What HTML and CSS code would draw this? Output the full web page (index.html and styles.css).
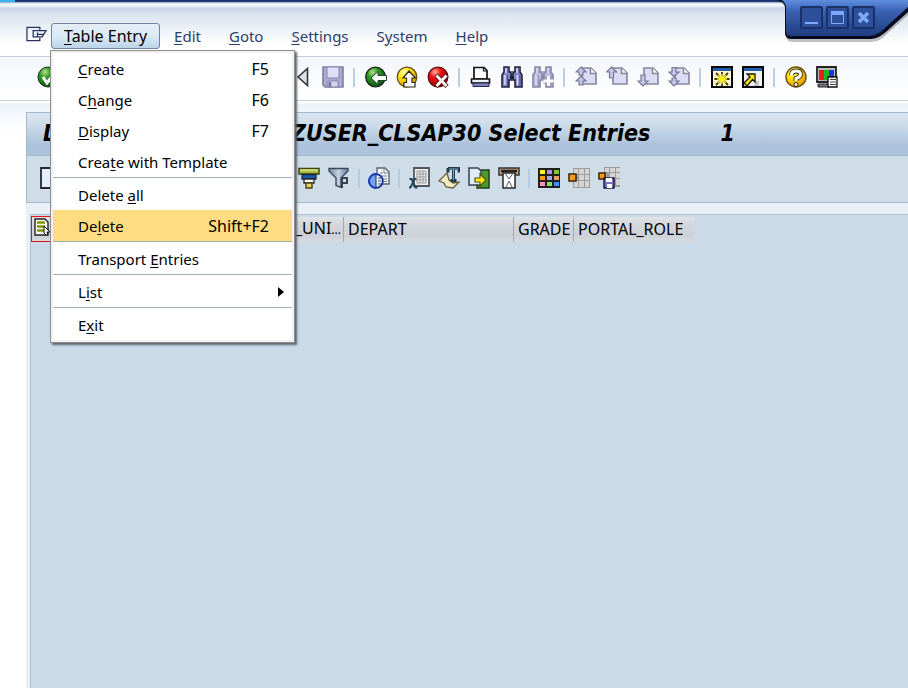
FILE: index.html
```html
<!DOCTYPE html>
<html lang="en">
<head>
<meta charset="utf-8">
<title>ZUSER_CLSAP30 Select Entries</title>
<link rel="stylesheet" href="styles.css">
</head>
<body>
<svg class="defs" width="0" height="0" aria-hidden="true">
  <defs>
    <radialGradient id="gGreen" cx="0.35" cy="0.25" r="0.8"><stop offset="0" stop-color="#b5e08c"/><stop offset="0.35" stop-color="#2f9a22"/><stop offset="1" stop-color="#0d4c12"/></radialGradient>
    <radialGradient id="gYellow" cx="0.35" cy="0.25" r="0.85"><stop offset="0" stop-color="#ffffb0"/><stop offset="0.4" stop-color="#ffe000"/><stop offset="1" stop-color="#e08a00"/></radialGradient>
    <radialGradient id="gRed" cx="0.35" cy="0.25" r="0.85"><stop offset="0" stop-color="#ffb0a0"/><stop offset="0.35" stop-color="#f01010"/><stop offset="1" stop-color="#8a0000"/></radialGradient>
    <linearGradient id="gCorner" x1="0" y1="0" x2="0" y2="1"><stop offset="0" stop-color="#5f8fe0"/><stop offset="0.3" stop-color="#3a62b4"/><stop offset="1" stop-color="#1f3c7e"/></linearGradient>
    <linearGradient id="gFunnel" x1="0" y1="0" x2="1" y2="0"><stop offset="0" stop-color="#7289a6"/><stop offset="0.5" stop-color="#c5d2e2"/><stop offset="1" stop-color="#62799a"/></linearGradient>
    <symbol id="binoculars" viewBox="0 0 22 22">
      <path d="M3 1h5v5h2v3h2V6h2V1h5v5l2 3v12h-7v-7H8v7H1V9l2-3z" fill="var(--fill)" stroke="var(--line)" stroke-width="1.6"/>
      <path d="M5 2v5M16 2v5M4 9v10M16.500 9v10" stroke="#d9dcfa" stroke-width="1.500"/>
      <path d="M7 2v5M18 2v5M6.500 9v11M19 9v11" stroke="var(--dark)" stroke-width="1.200"/>
      <path d="M9 10h4v3H9z" fill="var(--line)"/>
    </symbol>
    <symbol id="page" viewBox="0 0 22 22">
      <path d="M7 2h9l5 5v11H7z" fill="#dcdcf6" stroke="#85859c" stroke-width="1.600"/>
      <path d="M15.500 2v5.500H21" fill="#fff" stroke="#85859c" stroke-width="1.500"/>
    </symbol>
  </defs>
</svg>

<div class="window">
  <div class="window-corner">
    <svg class="corner-shape" viewBox="0 0 130 48" aria-hidden="true">
      <path d="M0 2C5 3 7 6 8 10V37Q9 42 14 42H94Q103 41 109 34L130 15V0H0z" fill="#3a3a44" opacity=".3"/>
      <path d="M0 0C5 2 7 4 7 8V34Q8 39 13 39H93Q102 38 109 31L130 12V0H0z" fill="#070b1e"/>
      <path d="M4 0C6 2 8 4 8 7V33Q9 36 13 36H92Q100 35 106 29L130 7V0H2z" fill="url(#gCorner)"/>
    </svg>
    <div class="window-buttons">
      <button type="button" aria-label="Minimize"><svg viewBox="0 0 19 19"><path d="M3 15h13" stroke="#7ea9fa" stroke-width="2"/></svg></button>
      <button type="button" aria-label="Maximize"><svg viewBox="0 0 19 19"><path d="M3.500 3.500h12v12h-12z" fill="none" stroke="#7ea9fa"/><path d="M3 5h13" stroke="#7ea9fa" stroke-width="4"/></svg></button>
      <button type="button" aria-label="Close"><svg viewBox="0 0 19 19"><path d="M5 5l9 9M14 5l-9 9" stroke="#7ea9fa" stroke-width="3.600"/></svg></button>
    </div>
  </div>

  <nav class="menubar" aria-label="Menu bar">
    <button class="session" type="button" aria-label="Session menu"><svg viewBox="0 0 22 16" fill="none" stroke="#26355f" stroke-width="1.300"><path d="M14.500 4V1H1v14h13.500v-3"/><path d="M21 4.500H7.500v6.500H17zM12 8.500h6M12 6.500v4"/></svg></button>
    <div class="menu-root">
      <button class="menu-title open" type="button" aria-expanded="true"><u>T</u>able Entry</button>
      <div class="menu" role="menu">
        <button type="button" role="menuitem"><span><u>C</u>reate</span><kbd>F5</kbd></button>
        <button type="button" role="menuitem"><span>C<u>h</u>ange</span><kbd>F6</kbd></button>
        <button type="button" role="menuitem"><span><u>D</u>isplay</span><kbd>F7</kbd></button>
        <button type="button" role="menuitem"><span>Crea<u>t</u>e with Template</span></button>
        <hr>
        <button type="button" role="menuitem"><span>Delete <u>a</u>ll</span></button>
        <button type="button" role="menuitem" class="active"><span>De<u>l</u>ete</span><kbd>Shift+F2</kbd></button>
        <hr>
        <button type="button" role="menuitem"><span>Transport <u>E</u>ntries</span></button>
        <hr>
        <button type="button" role="menuitem" class="has-submenu"><span>L<u>i</u>st</span><svg viewBox="0 0 6 10" aria-hidden="true"><path d="M0 0l6 5-6 5z"/></svg></button>
        <hr>
        <button type="button" role="menuitem"><span>E<u>x</u>it</span></button>
      </div>
    </div>
    <button class="menu-title" type="button"><u>E</u>dit</button>
    <button class="menu-title" type="button"><u>G</u>oto</button>
    <button class="menu-title" type="button"><u>S</u>ettings</button>
    <button class="menu-title" type="button">S<u>y</u>stem</button>
    <button class="menu-title" type="button"><u>H</u>elp</button>
  </nav>

  <div class="toolbar" role="toolbar" aria-label="Standard toolbar">
    <button type="button" aria-label="Enter"><svg viewBox="0 0 22 22"><circle cx="11" cy="11" r="10" fill="url(#gGreen)" stroke="#152c15"/><path d="M6 11l4 6 7-9" fill="none" stroke="#fff" stroke-width="3"/></svg></button>
    <input class="command" type="text" aria-label="Command">
    <button type="button" aria-label="Collapse command field"><svg viewBox="0 0 22 22"><path d="M16.500 2.500v17L7 11z" fill="#dde0e6" stroke="#30343c" stroke-width="1.600"/></svg></button>
    <button type="button" aria-label="Save"><svg viewBox="0 0 22 22"><path d="M1 1h20v20H3l-2-2z" fill="#a9a9d2" stroke="#8080a4" stroke-width="1.600"/><path d="M5 1h12v11H5z" fill="#e0e0fa" stroke="#8585ae"/><path d="M6 15h10v6H6z" fill="#d4d4ea" stroke="#8585ae"/><path d="M8 16v5" stroke="#77779c" stroke-width="2.500"/></svg></button>
    <i class="sep"></i>
    <button type="button" aria-label="Back"><svg viewBox="0 0 22 22"><circle cx="10.500" cy="11" r="9.800" fill="url(#gGreen)" stroke="#17271b" stroke-width="1.300"/><path d="M6 12l7-6.500V9.500h8.500v5H13v4z" fill="#fff" stroke="#26402b" stroke-width="1"/></svg></button>
    <button type="button" aria-label="Exit"><svg viewBox="0 0 22 22"><circle cx="11" cy="11" r="9.800" fill="url(#gYellow)" stroke="#66511a" stroke-width="1.300"/><path d="M13 5l6.500 7H16v4.500h3V21H8v-4.500h2.500V12H7z" fill="#fff" stroke="#2c2713" stroke-width="1.200"/></svg></button>
    <button type="button" aria-label="Cancel"><svg viewBox="0 0 22 22"><circle cx="11" cy="11" r="9.800" fill="url(#gRed)" stroke="#5d0d0d" stroke-width="1.300"/><path d="M9 9l11 11.500M20 9L9 20.500" stroke="#4a1717" stroke-width="4.500"/><path d="M9.500 9.500l10 10.500M19.500 9.500L9.500 20" stroke="#fff" stroke-width="2.800"/></svg></button>
    <i class="sep"></i>
    <button type="button" aria-label="Print"><svg viewBox="0 0 22 22"><path d="M4 1.500h10l3 3V13H4z" fill="#fff" stroke="#111" stroke-width="1.700"/><path d="M13.500 1.500V5H17" fill="none" stroke="#111" stroke-width="1.200"/><path d="M1.500 13h18v4h-18z" fill="#eeeefa" stroke="#111" stroke-width="1.600"/><path d="M3 17h16v3.500H3z" fill="#7d82bd" stroke="#22244e"/></svg></button>
    <button type="button" aria-label="Find" class="strong"><svg viewBox="0 0 22 22"><use href="#binoculars"/></svg></button>
    <button type="button" aria-label="Find next" class="faded"><svg viewBox="0 0 22 22"><use href="#binoculars"/><path d="M16.500 10v10M11.500 15h10" stroke="#9898bc" stroke-width="5"/><path d="M16.500 10v10M11.500 15h10" stroke="#fff" stroke-width="2.800"/></svg></button>
    <i class="sep"></i>
    <button type="button" aria-label="First page"><svg viewBox="0 0 22 22"><use href="#page"/><path d="M6 1l5 5H8v3H4V6H1zM6 10l5 5H8v4H4v-4H1z" fill="#c5c5ee" stroke="#77778f" stroke-width="1.200"/></svg></button>
    <button type="button" aria-label="Previous page"><svg viewBox="0 0 22 22"><use href="#page"/><path d="M5.500 1l5 5H7.500v6h-4V6H.5z" fill="#c5c5ee" stroke="#77778f" stroke-width="1.200"/></svg></button>
    <button type="button" aria-label="Next page"><svg viewBox="0 0 22 22"><use href="#page"/><path d="M6 20l-5-5h3V9h4v6h3z" fill="#c5c5ee" stroke="#77778f" stroke-width="1.200"/></svg></button>
    <button type="button" aria-label="Last page"><svg viewBox="0 0 22 22"><use href="#page"/><path d="M6 10.500L1 6h3V1.500h4V6h3zM6 20l-5-5h3v-3h4v3h3z" fill="#c5c5ee" stroke="#77778f" stroke-width="1.200"/></svg></button>
    <i class="sep"></i>
    <button type="button" aria-label="New session"><svg viewBox="0 0 22 22"><path d="M1 1h20v20H1z" fill="#fff9cf" stroke="#080808" stroke-width="2"/><path d="M2 2h18v3H2z" fill="#235ca8"/><path d="M11 6v4M11 16v4M3.500 13H8M14 13h4.500M5 7l4 4M17 7l-4 4M5 19l4-4M17 19l-4-4" stroke="#3e390b" stroke-width="1.800"/><path d="M11 8v10M6 13h10M7 9l8 8M15 9l-8 8" stroke="#fff000" stroke-width="1.300"/></svg></button>
    <button type="button" aria-label="Create shortcut"><svg viewBox="0 0 22 22"><path d="M1 1h20v20H1z" fill="#f2f2ee" stroke="#080808" stroke-width="2"/><path d="M2 2h18v3H2z" fill="#235ca8"/><path d="M13 15h4v5h-5z" fill="#c4c6cb"/><path d="M5 8h8v8l-2.500-2.500L5 20l-3-3 6-6z" fill="#f6e600" stroke="#1d1b05" stroke-width="1.300"/></svg></button>
    <i class="sep"></i>
    <button type="button" aria-label="Help"><svg viewBox="0 0 22 22"><circle cx="11" cy="11" r="10" fill="url(#gYellow)" stroke="#6b4d12" stroke-width="1.400"/><path d="M6.500 9q0-4 4.500-4t4.500 3.500q0 2.500-4.500 4v2.500" fill="none" stroke="#2a2410" stroke-width="4.800"/><path d="M6.500 9q0-4 4.500-4t4.500 3.500q0 2.500-4.500 4v2.500" fill="none" stroke="#fff" stroke-width="3"/><circle cx="11" cy="18.500" r="2" fill="#fff" stroke="#2a2410"/></svg></button>
    <button type="button" aria-label="Customize local layout"><svg viewBox="0 0 22 22"><path d="M1 1h19v15H1z" fill="#b9bbc0" stroke="#222" stroke-width="1.800"/><path d="M3 4h5v10H3z" fill="#f01c1c"/><path d="M8 4h5v10H8z" fill="#16ba22"/><path d="M13 4h5v10h-5z" fill="#1c32e0"/><path d="M2 18h11v3H2z" fill="#7b7b82" stroke="#222"/><path d="M12 11h9v10h-9z" fill="#fff" stroke="#111" stroke-width="1.300"/><path d="M14 13.500h6M14 16h6M14 18.500h6" stroke="#444"/></svg></button>
  </div>

  <main class="content">
    <h1 class="title"><span class="title-prefix">D</span><span>ZUSER_CLSAP30 Select Entries</span><span class="count">1</span></h1>

    <div class="app-toolbar" role="toolbar" aria-label="Application toolbar">
      <button type="button" aria-label="Create"><svg viewBox="0 0 22 22"><path d="M2 1h18v20H2z" fill="#e2effa" stroke="#26282c" stroke-width="1.800"/></svg></button>
      <span class="spacer"></span>
      <button type="button" aria-label="Sort"><svg viewBox="0 0 22 22"><path d="M1 1.500h20v5.500H1z" fill="#a9bc3b" stroke="#3d4516" stroke-width="1.500"/><path d="M2 3h18" stroke="#dbe58a" stroke-width="1.500"/><path d="M4 7.500h14v4.500H4z" fill="#1b5aa2" stroke="#152a48" stroke-width="1.300"/><path d="M6 12h10v4H6z" fill="#fff" stroke="#24272c" stroke-width="1.300"/><path d="M8 16h6v5H8z" fill="#e6d35f" stroke="#4a4216" stroke-width="1.400"/></svg></button>
      <button type="button" aria-label="Filter"><svg viewBox="0 0 22 22"><path d="M1 1.500h19v2.500l-7 7v9.500l-5-2v-7.500L1 4z" fill="url(#gFunnel)" stroke="#3c4a5c" stroke-width="1.400"/><path d="M14 11h5v5h-5v5M14 11v6" fill="none" stroke="#39424e" stroke-width="2"/></svg></button>
      <i class="sep"></i>
      <button type="button" aria-label="Details"><svg viewBox="0 0 22 22"><path d="M9 1h8l4 4v12H9z" fill="#f3f6fb" stroke="#5b6572" stroke-width="1.400"/><path d="M16 1v5h5M12 6h3M12 9h7M12 12h7M12 14.500h7" fill="none" stroke="#727d8e"/><circle cx="8" cy="14" r="6.800" fill="#f2f8ff" stroke="#0f2c99" stroke-width="1.800"/><path d="M8 7a7 7 0 000 14z" fill="#76a3ea"/><path d="M8 7a7 7 0 000 14" fill="none" stroke="#123bbd" stroke-width="1.800"/><path d="M8 8v12M10 11h3M10 14h3M10 17h3" stroke="#26457a" stroke-width="1.200"/></svg></button>
      <i class="sep"></i>
      <button type="button" aria-label="Spreadsheet"><svg viewBox="0 0 22 22"><path d="M6 1h15v18H6z" fill="#eee" stroke="#50555d" stroke-width="1.800"/><path d="M9 4h9v12H9zM9 7h9M9 10h9M9 13h9M12 4v12M15 4v12" fill="none" stroke="#999" stroke-width="1"/><path d="M1.500 12h2l4 8.500h2M8.500 12h-2l-4 8.500H1" fill="none" stroke="#20465e" stroke-width="2"/></svg></button>
      <button type="button" aria-label="Word processing"><svg viewBox="0 0 22 22"><path d="M1 14l8-8 2 7 4 3 6-1-6 6-7-1-2-4z" fill="#f3edc2" stroke="#66603e" stroke-width="1.300"/><path d="M10 1.500h11v4M10 1v4.500M15.500 2v11M12.500 13.500h6" fill="none" stroke="#253c4e" stroke-width="3"/><path d="M11 2h9M15.500 2v11" stroke="#7faac5" stroke-width="1"/></svg></button>
      <button type="button" aria-label="Local file"><svg viewBox="0 0 22 22"><path d="M11 3h10v18H9V10z" fill="#469d2c" stroke="#203c17" stroke-width="1.500"/><path d="M1 1h9l3 3v14H1z" fill="#dfedf9" stroke="#354354" stroke-width="1.500"/><path d="M7 11h5V7l6 6-6 6v-4H7z" fill="#ffec17" stroke="#565011" stroke-width="1.200"/></svg></button>
      <button type="button" aria-label="Mail recipient"><svg viewBox="0 0 22 22"><path d="M1 1h20v7H1z" fill="#c3a378" stroke="#333" stroke-width="1.500"/><path d="M3 4h16" stroke="#222" stroke-width="2.500"/><path d="M5 6h12v15H5z" fill="#fff" stroke="#282828" stroke-width="1.500"/><path d="M7.500 7l3.500 5 3.500-5M8 20l3-6 3 6" fill="none" stroke="#59616d" stroke-width="1"/></svg></button>
      <i class="sep"></i>
      <button type="button" aria-label="Choose layout"><svg viewBox="0 0 22 22"><path d="M0 1h22v20H0z" fill="#202020"/><path d="M2 3h5v4H2z" fill="#fff028"/><path d="M9 3h5v4H9z" fill="#b48ee0"/><path d="M16 3h5v4h-5z" fill="#78c83c"/><path d="M2 9h5v4H2z" fill="#ff9c18"/><path d="M9 9h5v4H9z" fill="#a9ace2"/><path d="M16 9h5v4h-5z" fill="#e4a070"/><path d="M2 15h5v4H2z" fill="#ff94b4"/><path d="M9 15h5v4H9z" fill="#8ce060"/><path d="M16 15h5v4h-5z" fill="#3d91ff"/></svg></button>
      <button type="button" aria-label="Change layout"><svg viewBox="0 0 22 22"><path d="M5 1h17v20H5z" fill="#9c9c9c"/><path d="M6 2h4v5H6zM11 2h5v5h-5zM17 2h4v5h-4zM11 8h5v5h-5zM17 8h4v5h-4zM6 14h4v6H6zM11 14h5v6h-5zM17 14h4v6h-4z" fill="#d4d4d4"/><path d="M1 7h7v7H1z" fill="#ff9a14" stroke="#392507" stroke-width="1.500"/></svg></button>
      <button type="button" aria-label="Save layout"><svg viewBox="0 0 22 22"><path d="M6 0h16v20H6z" fill="#9c9c9c"/><path d="M7 1h4v4H7zM12 1h5v4h-5zM18 1h4v4h-4zM12 6h5v5h-5zM18 6h4v5h-4zM18 12h4v6h-4z" fill="#d4d4d4"/><path d="M1 6h6v6H1z" fill="#ff9a14" stroke="#392507" stroke-width="1.500"/><path d="M6 11h10v10H6z" fill="#7474bf" stroke="#1b1b40" stroke-width="1.400"/><path d="M8 11h6v4H8zM9 17h5v4H9z" fill="#fff"/></svg></button>
    </div>

    <div class="grid">
      <table>
        <colgroup><col class="c-select"><col class="c-key"><col class="c-unit"><col class="c-depart"><col class="c-grade"><col class="c-role"></colgroup>
        <thead>
          <tr>
            <th class="select-all" scope="col"><button type="button" aria-label="Select all"><svg viewBox="0 0 16 18"><path d="M1 1h10l3 3v13H1z" fill="#fff" stroke="#222" stroke-width="1.400"/><path d="M3 4.500h8M3 8.500h8M3 12.500h8" stroke="#7c9800" stroke-width="2.600"/><path d="M10 8l6 6h-3l1 3h-2l-2-2z" fill="#fff" stroke="#111"/></svg></button></th>
            <th scope="col"></th>
            <th class="unit" scope="col">S_UNI<small>...</small></th>
            <th scope="col">DEPART</th>
            <th scope="col">GRADE</th>
            <th scope="col">PORTAL_ROLE</th>
          </tr>
        </thead>
      </table>
    </div>
  </main>
</div>
</body>
</html>
```
FILE: styles.css
```css
* { box-sizing: border-box; }

body {
  margin: 0;
  font: 16px/20px Tahoma, "Noto Sans", sans-serif;
  color: #000;
  background: #fff;
}

button {
  margin: 0;
  padding: 0;
  border: 0;
  background: none;
  font: inherit;
  color: inherit;
}

svg { display: block; }
.defs { position: absolute; }
u { text-underline-offset: 2px; text-decoration-thickness: 1px; }

.window {
  position: relative;
  display: flex;
  flex-direction: column;
  min-height: 100vh;
  overflow: hidden;
  background: linear-gradient(90deg, #35b5f0 15px, #1d3470 15px) 0 0 / 100% 2px no-repeat;
}

.window-corner {
  position: absolute;
  top: 0;
  right: 0;
  width: 130px;
}

.window-buttons {
  position: absolute;
  top: 6px;
  left: 22px;
  display: flex;
  gap: 3px;
}

.window-buttons button {
  width: 23px;
  height: 23px;
  border: 2px solid #1a3068;
  border-radius: 2px;
  background: #2e509a;
}

.menubar {
  display: flex;
  align-items: center;
  height: 55px;
  margin-top: 2px;
  padding: 13px 0 0 26px;
  border-bottom: 1px solid #c3cad9;
  background: linear-gradient(#93a5c0 0, #f6f9fc 2px, #f0f4f9 4px, #c9d6e6 6px, #dde5ef 14px, #fff 42px);
  color: #2c3e6b;
}

.session { width: 25px; margin-top: -4px; }
.session svg { width: 21px; height: 16px; }

.menu-root { position: relative; }

.menu-title {
  height: 26px;
  padding: 0 13px;
  border: 1px solid transparent;
  font-size: 15px;
  white-space: nowrap;
}

.menu-title.open {
  padding: 0 12px;
  border-color: #73839f;
  border-radius: 3px;
  background: linear-gradient(#e5edf6, #dceaf5 50%, #bcd4e8);
  color: #000;
  font-size: 16px;
}

.menu {
  position: absolute;
  z-index: 2;
  top: 27px;
  left: -1px;
  width: 245px;
  padding: 2px;
  border: 1px solid #8e8e8e;
  background: #fff;
  box-shadow: inset 0 0 0 2px #f1f1f1, 2px 2px 2px #5e646c;
  color: #000;
  font-size: 15px;
}

.menu button {
  display: flex;
  align-items: center;
  justify-content: space-between;
  width: 100%;
  height: 31px;
  padding: 2px 23px 0 25px;
}

.menu kbd { font: inherit; font-size: 16px; }
.menu .active { background: #fddc82; }
.menu .has-submenu { padding-right: 8px; }
.menu svg { width: 6px; height: 10px; }

.menu hr {
  height: 2px;
  margin: 0;
  border: 0;
  border-top: 1px solid #a4afbd;
}

.toolbar {
  display: flex;
  align-items: center;
  height: 44px;
  padding-left: 32px;
  padding-bottom: 3px;
  border-bottom: 1px solid #c6d0dd;
  background: linear-gradient(#fff 0, #f4f6fb 2px, #fff 36px);
}

.toolbar button { flex: none; width: 31px; }
.toolbar svg { width: 22px; height: 22px; margin: 0 auto; }

.command {
  width: 223px;
  height: 24px;
  border: 1px solid #9aa7b8;
}

.sep {
  flex: none;
  width: 2px;
  height: 19px;
  margin: 0 5px;
  background: #b9d0e4;
}

.strong { --fill: #8388c6; --line: #20223a; --dark: #4d5394; }
.faded { --fill: #bcbce0; --line: #8585a5; --dark: #9696bf; }

.content {
  flex: 1;
  display: flex;
  flex-direction: column;
  padding: 11px 0 0 26px;
  background: linear-gradient(#fff 0, #fff 2px, #ecf1f8 3px, #f3f7fb 11px, transparent 30px);
}

.title {
  display: flex;
  align-items: center;
  height: 44px;
  margin: 0;
  padding: 0 0 3px 16px;
  border: solid #a5b9cd;
  border-width: 1px 0 1px 1px;
  background: linear-gradient(#d9e6f0, #cbdbe9 30%, #abc3db 75%, #adc4db);
  font: italic bold 23px/28px "DejaVu Sans Condensed", "DejaVu Sans", sans-serif;
  white-space: nowrap;
}

.title-prefix { flex: none; width: 248px; }
.count { margin-left: 70px; }

.app-toolbar {
  display: flex;
  align-items: center;
  height: 47px;
  padding: 0 0 2px 8px;
  border: solid #a5b7c9;
  border-width: 0 0 1px 1px;
  background: #cfdde8;
}

.app-toolbar button { flex: none; width: 30px; }
.app-toolbar svg { width: 22px; height: 22px; margin: 0 auto; }
.app-toolbar .sep { margin: 0 4px; background: #b2cbe4; }
.spacer { flex: none; width: 229px; }

.grid {
  flex: 1;
  border-top: 11px solid #e8eff6;
  border-left: 4px solid #e8eff6;
  background: #cbdae9;
  box-shadow: inset 1px 1px #b2c3d5;
}

.grid table {
  width: 662px;
  margin: 2px 0 0 1px;
  border-collapse: collapse;
  table-layout: fixed;
}

.grid th {
  height: 25px;
  padding: 0 0 0 4px;
  border-right: 1px solid #a0a9b4;
  background: linear-gradient(#e2e5e7, #d4d8dd 25%, #ccd1d8 75%, #d8dbe0);
  font-weight: normal;
  text-align: left;
  white-space: nowrap;
}

.grid th:last-child { border-right: 0; }
.grid .select-all { padding: 0 0 0 2px; border: 1px solid #e01414; }
.select-all svg { width: 16px; height: 18px; }
.grid .unit { padding: 0 2px 0 0; text-align: right; }
.unit small { font-size: 12px; }

.c-select { width: 24px; }
.c-key { width: 188px; }
.c-unit { width: 100px; }
.c-depart { width: 170px; }
.c-grade { width: 60px; }
.c-role { width: 120px; }
```
